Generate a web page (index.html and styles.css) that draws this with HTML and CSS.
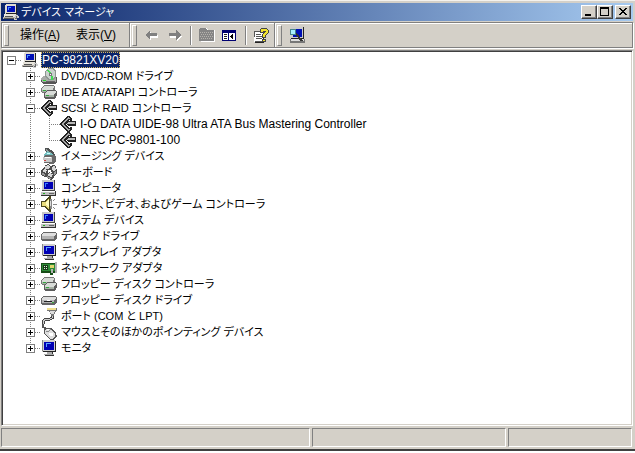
FILE: index.html
```html
<!DOCTYPE html>
<html lang="ja">
<head>
<meta charset="utf-8">
<title>デバイス マネージャ</title>
<link rel="stylesheet" href="styles.css">
</head>
<body>
<svg class="sprites" aria-hidden="true">
  <symbol id="pc" viewBox="0 0 16 16">
    <path d="M3 0h10v1h1v9H2V1h1z" fill="#dedbd3"/><path d="M13 1h1v9H3V9h10z" fill="#222"/>
    <path d="M4 2h8v6H4z" fill="#0010b8"/><path d="M5 3h3v1H6v2H5z" fill="#4890ff"/>
    <path d="M1 10h12v3H1z" fill="#e8e5dc"/><path d="M0 13h14v2H0z" fill="#b4b1aa"/><path d="M1 14h11v1H1zM13 10h1v3h-1zM2 12h8v1H2z" fill="#555"/>
    <path d="M12 11h3v1h1v2h-2v2h-3v-2h1z" fill="#ccc"/><path d="M13 12h1v3h-2v-1h1z" fill="#666"/>
  </symbol>
  <symbol id="computer" viewBox="0 0 16 16">
    <path d="M1 0h13v11H1z" fill="#444"/><path d="M1 0h12v10H1z" fill="#c8c8c8"/><path d="M3 2h9v7H3z" fill="#0000b4"/><path d="M4 3h3v1H5v3H4z" fill="#3880ff"/>
    <path d="M0 11h15v4H0z" fill="#c0c0c0"/><path d="M0 15h15v1H0zM14 11h1v5h-1z" fill="#333"/><path d="M0 11h14v1H0z" fill="#fff"/><path d="M2 13h2v1H2z" fill="#20b020"/><path d="M8 13h5v1H8z" fill="#666"/>
  </symbol>
  <symbol id="monitor" viewBox="0 0 16 16">
    <path d="M1 0h13v12H1z" fill="#d0d0d0"/><path d="M14 1h1v11H2v-1h12z" fill="#222"/><path d="M1 0h1v11H1z" fill="#888"/><path d="M3 2h10v8H3z" fill="#0000b4"/><path d="M5 3h5v1H6v3H5z" fill="#58a0ff"/>
    <path d="M6 12h5v2H6zM3 14h10v1H3z" fill="#aaa"/><path d="M4 15h9v1H4zM11 12h1v2h-1z" fill="#333"/>
  </symbol>
  <symbol id="disc" viewBox="0 0 16 16">
    <path d="M0 10l2-2h12l2 2v4l-2 2H2l-2-2z" fill="#555"/><path d="M0 10l2-2h12l1 2v4H1z" fill="#a9aca9"/>
    <path d="M5 2l3-2h4l3 3v6l-3 3H7L4 9V4z" fill="#8f9692"/><path d="M5 3l3-2h4l2 3v4l-3 3H8L5 8z" fill="#c9d2cd"/>
    <path d="M6 2h2l2 3-1 1zM10 7l2 1v4h-2z" fill="#42dd55"/><path d="M8 5h3v3H8z" fill="#777"/><path d="M9 6h1v1H9z" fill="#fff"/>
    <path d="M2 12h3v1H2z" fill="#25d52d"/><path d="M5 13h9v1H5z" fill="#666"/>
  </symbol>
  <symbol id="drives" viewBox="0 0 16 16">
    <path d="M0 4l3-3h9l2 2v3l-2 3H1L0 8z" fill="#777"/><path d="M1 4l2-2h9l1 1-1 3H1z" fill="#d7dbd7"/><path d="M1 6h10v2H1z" fill="#a5b0a5"/><path d="M2 6h3v1H2z" fill="#35a540"/>
    <path d="M3 10l3-4h8l2 2v3l-2 4H4l-1-1z" fill="#5c5c5c"/><path d="M4 10l2-3h8l1 1-2 3H4z" fill="#d7dbd7"/><path d="M4 11h9v2H4z" fill="#a5b0a5"/><path d="M5 11h3v1H5z" fill="#35a540"/>
  </symbol>
  <symbol id="scsi" viewBox="0 0 16 16">
    <path d="M7 0h2l3 3v2h-1L9 4 5 8l4 4 2-1h1v2l-3 3H7L0 9V7z" fill="#222"/>
    <path d="M8 1l2 2h-2L3 8l5 5h2l-2 2-7-7z" fill="#aaa"/>
    <path d="M8 5h7l1 1v3l-1 1H8L6 8V7z" fill="#222"/><path d="M8 6h7v2H7z" fill="#b8b8b8"/>
  </symbol>
  <symbol id="camera" viewBox="0 0 16 16">
    <path d="M4 0h3l6 4 1 3-2 1-8-5z" fill="#4f5252"/><path d="M5 1l7 5-1 1-6-4z" fill="#969c9c"/><path d="M3 6l3-3 6 3v3H4z" fill="#75bfc0"/><path d="M6 5h3v1H6z" fill="#c9ffff"/><path d="M2 9l2-2h9l2 2v5l-3 2-9-1z" fill="#696969"/><path d="M2 9h9v5H3z" fill="#c9c9c9"/><path d="M4 9h6v1H4z" fill="#fff"/><path d="M3 12h2v1H3z" fill="#c44"/>
  </symbol>
  <symbol id="keys" viewBox="0 0 16 16">
    <path d="M4 1l3-1 3 2v4H3zM0 6l3-2 4 2v5l-3 2-4-2zM9 5l2-4h3l2 5v4l-3 2zM5 11l3-3 5 2v4l-3 2-4-2z" fill="#4c4c4c"/>
    <path d="M4 2l3-1 2 2-1 2H4zM1 7l2-2 3 1-1 3-3-1zM11 4l1-2h2l1 4-3 1zM7 11l1-2 4 1-1 3-4-1z" fill="#d7d7d7"/><path d="M1 9l3 1v2l-3-1zM6 12l4 2v1l-4-1zM13 8l2-1v3l-2 1z" fill="#999"/>
  </symbol>
  <symbol id="speaker" viewBox="0 0 16 16">
    <path d="M0 5h3l5-5h2v16H8l-5-5H0z" fill="#4b481e"/><path d="M1 6h3l4-4v12L4 10H1z" fill="#e8dc79"/><path d="M5 6l3-3v9L5 9z" fill="#fffdc2"/><path d="M9 3h2v10H9z" fill="#888"/><path d="M9 5h1v5H9z" fill="#ddd"/><path d="M12 5l2-2M12 8h4M12 11l2 2" stroke="#888"/>
  </symbol>
  <symbol id="disk" viewBox="0 0 16 16">
    <path d="M0 6l2-2h12l2 1v5l-2 3H1l-1-1z" fill="#666"/><path d="M1 6l2-1h11l1 1-1 2H1z" fill="#dedede"/><path d="M1 8h12v3H1z" fill="#b4b4b4"/>
  </symbol>
  <symbol id="floppy" viewBox="0 0 16 16">
    <use href="#disk"/><path d="M3 9h8v1H3z" fill="#222"/><path d="M6 8h3v1H6z" fill="#fff"/><path d="M11 10h2v1h-2z" fill="#39a839"/>
  </symbol>
  <symbol id="network" viewBox="0 0 16 16">
    <path d="M0 3h15v10h-3v2H9v-2H0z" fill="#174d17"/><path d="M1 4h13v7H1z" fill="#2c8b36"/><path d="M2 5h5v5H2z" fill="#173717"/><path d="M3 6h1v1H3zM5 6h1v1H5zM3 8h1v1H3zM5 8h1v1H5z" fill="#d8f7d8"/><path d="M9 5h4v3H9z" fill="#ddd36b"/><path d="M10 9h2v4h-2zM14 2h2v11h-2z" fill="#b4b4b4"/>
  </symbol>
  <symbol id="port" viewBox="0 0 16 16">
    <path d="M6 0h10v3l-2 1-1 4h-3L9 4 6 3z" fill="#777"/><path d="M6 0h9v2H6z" fill="#f0df8d"/><path d="M9 3h5l-1 3h-3z" fill="#ddd"/><path d="M11 8v2l-2 1H5l-3 2v3" fill="none" stroke="#444" stroke-width="3"/><path d="M11 8v2l-2 1H5l-3 2v3" fill="none" stroke="#ccc"/>
  </symbol>
  <symbol id="mouse" viewBox="0 0 16 16">
    <path d="M2 0v3l5 3" fill="none" stroke="#555" stroke-width="2"/><path d="M4 4h6l5 5 1 3-4 4H9L3 10V6z" fill="#555"/><path d="M5 5h4l5 5v2l-2 3H9L4 9V6z" fill="#ddd"/><path d="M5 8l3-1 2-2" fill="none" stroke="#888"/><path d="M6 5h2v1H6zM8 9h4v3H9z" fill="#fff"/>
  </symbol>
</svg>

<main class="window">
  <header class="titlebar">
    <svg class="icon"><use href="#pc"/></svg>
    <h1 class="title">デバイス マネージャ</h1>
    <div class="captions">
      <button class="caption" aria-label="最小化"><svg class="glyph" viewBox="0 0 12 10"><path d="M2 7h6v2H2z"/></svg></button>
      <button class="caption" aria-label="最大化"><svg class="glyph" viewBox="0 0 12 10"><path fill-rule="evenodd" d="M1 0h9v9H1zM2 2v6h7V2z"/></svg></button>
      <button class="caption close" aria-label="閉じる"><svg class="glyph" viewBox="0 0 12 10"><path d="M2 1h2v1h1v1h2V2h1V1h2v1H9v1H8v1H7v1h1v1h1v1h1v1H8V7H7V6H5v1H4v1H2V7h1V6h1V5h1V4H4V3H3V2H2z"/></svg></button>
    </div>
  </header>

  <div class="toolbar">
    <nav class="band menus">
      <button class="menu">操作(<u>A</u>)</button>
      <button class="menu">表示(<u>V</u>)</button>
    </nav>
    <div class="band tools">
      <button class="tool" aria-label="戻る"><svg class="icon" viewBox="0 0 16 16"><path d="M2 9l5-4v3h7v3H7v3z" fill="#fff"/><path d="M1 8l5-5v3h7v3H6v4z" fill="#808080"/></svg></button>
      <button class="tool" aria-label="進む"><svg class="icon" viewBox="0 0 16 16"><path d="M15 9l-5-4v3H3v3h7v3z" fill="#fff"/><path d="M14 8L9 3v3H2v3h7v4z" fill="#808080"/></svg></button>
      <span class="divider"></span>
      <button class="tool" aria-label="上へ"><svg class="icon" viewBox="0 0 16 16"><path d="M1 3l1-2h5l2 2h7v12H2z" fill="#fff"/><path d="M0 2l1-1h5l2 2h7v11H0z" fill="#858585"/><path d="M1 5h13M2 7h12M1 9h13M2 11h12" stroke="#b5b2ad" stroke-dasharray="1 1"/></svg></button>
      <button class="tool" aria-label="ツリーの表示"><svg class="icon" viewBox="0 0 16 16"><path d="M0 3h14v11H0z" fill="#000070"/><path d="M1 6h5v7H1zM7 6h6v7H7z" fill="#fff"/><path d="M2 7h3v1H2zM2 9h3v1H2zM2 11h3v1H2z" fill="#222"/><path d="M8 9l3-3v7z" fill="#000"/></svg></button>
      <span class="divider"></span>
      <button class="tool" aria-label="ヘルプ"><svg class="icon" viewBox="0 0 16 16"><path d="M1 4h9v12H1z" fill="#222"/><path d="M0 4h9v11H0z" fill="#fff"/><path d="M0 4h9v1H0zM0 5h1v10h9v-1H1zM2 7h5v1H2zM2 9h6v1H2zM2 11h6v1H2z" fill="#555"/><path d="M6 5V3l2-2h4l2 2v3l-3 3v1H8V8l3-3V4H9v1zM8 12h3v2H8z" fill="#f1e22d" stroke="#444"/></svg></button>
    </div>
    <div class="band scan">
      <button class="tool" aria-label="ハードウェア変更のスキャン"><svg class="icon" viewBox="0 0 16 16"><path d="M2 0h13v12H2z" fill="#222"/><path d="M2 0h12v11H2z" fill="#ccc"/><path d="M4 2h9v8H4z" fill="#0010b4"/><path d="M1 12h15v4H1z" fill="#777"/><path d="M2 12h13v2H2z" fill="#ddd"/><path d="M6 6l7 8" stroke="#333" stroke-width="2"/><circle cx="4" cy="5" r="3" fill="#a8f0ff" stroke="#47868b"/></svg></button>
    </div>
  </div>

  <section class="pane">
    <ul class="tree">
      <li>
        <div class="row"><button class="expander open" aria-label="折りたたむ"></button><svg class="icon"><use href="#pc"/></svg><span class="label selected">PC-9821XV20</span></div>
        <ul class="branch">
          <li><div class="row"><button class="expander" aria-label="展開"></button><svg class="icon"><use href="#disc"/></svg><span class="label kana">DVD/CD-ROM ドライブ</span></div></li>
          <li><div class="row"><button class="expander" aria-label="展開"></button><svg class="icon"><use href="#drives"/></svg><span class="label kana">IDE ATA/ATAPI コントローラ</span></div></li>
          <li>
            <div class="row"><button class="expander open" aria-label="折りたたむ"></button><svg class="icon"><use href="#scsi"/></svg><span class="label kana">SCSI と RAID コントローラ</span></div>
            <ul class="branch">
              <li><div class="row leaf"><svg class="icon"><use href="#scsi"/></svg><span class="label">I-O DATA UIDE-98 Ultra ATA Bus Mastering Controller</span></div></li>
              <li><div class="row leaf"><svg class="icon"><use href="#scsi"/></svg><span class="label">NEC PC-9801-100</span></div></li>
            </ul>
          </li>
          <li><div class="row"><button class="expander" aria-label="展開"></button><svg class="icon"><use href="#camera"/></svg><span class="label kana">イメージング デバイス</span></div></li>
          <li><div class="row"><button class="expander" aria-label="展開"></button><svg class="icon"><use href="#keys"/></svg><span class="label kana">キーボード</span></div></li>
          <li><div class="row"><button class="expander" aria-label="展開"></button><svg class="icon"><use href="#computer"/></svg><span class="label kana">コンピュータ</span></div></li>
          <li><div class="row"><button class="expander" aria-label="展開"></button><svg class="icon"><use href="#speaker"/></svg><span class="label kana">サウンド、ビデオ、およびゲーム コントローラ</span></div></li>
          <li><div class="row"><button class="expander" aria-label="展開"></button><svg class="icon"><use href="#computer"/></svg><span class="label kana">システム デバイス</span></div></li>
          <li><div class="row"><button class="expander" aria-label="展開"></button><svg class="icon"><use href="#disk"/></svg><span class="label kana">ディスク ドライブ</span></div></li>
          <li><div class="row"><button class="expander" aria-label="展開"></button><svg class="icon"><use href="#monitor"/></svg><span class="label kana">ディスプレイ アダプタ</span></div></li>
          <li><div class="row"><button class="expander" aria-label="展開"></button><svg class="icon"><use href="#network"/></svg><span class="label kana">ネットワーク アダプタ</span></div></li>
          <li><div class="row"><button class="expander" aria-label="展開"></button><svg class="icon"><use href="#drives"/></svg><span class="label kana">フロッピー ディスク コントローラ</span></div></li>
          <li><div class="row"><button class="expander" aria-label="展開"></button><svg class="icon"><use href="#floppy"/></svg><span class="label kana">フロッピー ディスク ドライブ</span></div></li>
          <li><div class="row"><button class="expander" aria-label="展開"></button><svg class="icon"><use href="#port"/></svg><span class="label kana">ポート (COM と LPT)</span></div></li>
          <li><div class="row"><button class="expander" aria-label="展開"></button><svg class="icon"><use href="#mouse"/></svg><span class="label kana">マウスとそのほかのポインティング デバイス</span></div></li>
          <li><div class="row"><button class="expander" aria-label="展開"></button><svg class="icon"><use href="#monitor"/></svg><span class="label kana">モニタ</span></div></li>
        </ul>
      </li>
    </ul>
  </section>

  <footer class="status"><span></span><span></span><span></span></footer>
</main>
</body>
</html>
```
FILE: styles.css
```css
* { box-sizing: border-box; }

body {
  margin: 0;
  min-height: 100vh;
  display: flex;
  flex-direction: column;
  padding-bottom: 2px;
  background: #fff;
  color: #000;
  font: 12px/16px "Liberation Sans", "Noto Sans CJK JP", sans-serif;
  font-feature-settings: "palt";
}

button { font: inherit; color: inherit; padding: 0; border: 0; background: none; }
ul { list-style: none; margin: 0; padding: 0; }
svg { shape-rendering: crispEdges; display: block; }
.sprites { position: absolute; width: 0; height: 0; }
.icon { width: 16px; height: 16px; flex: none; }

.window {
  flex: 1;
  display: flex;
  flex-direction: column;
  padding: 2px 2px 1px 1px;
  background: #d4d0c8;
  border-top: 1px solid #f4f2ee;
  border-bottom: 2px solid #404040;
}

.titlebar {
  display: flex;
  align-items: center;
  height: 18px;
  padding: 0 2px;
  background: linear-gradient(to right, #0a246a, #a6caf0);
  color: #fff;
}
.title { flex: 1; margin: 0 0 0 2px; font-size: 11px; font-weight: 400; }
.captions { display: flex; }
.caption {
  width: 16px;
  height: 14px;
  padding: 1px;
  background: #d4d0c8;
  border: 1px solid;
  border-color: #fff #404040 #404040 #fff;
  box-shadow: inset -1px -1px #808080;
}
.close { margin-left: 2px; }
.glyph { width: 12px; height: 10px; }

.toolbar {
  display: flex;
  height: 26px;
  margin-top: 1px;
  border: 1px solid #808080;
  box-shadow: inset 1px 1px #fff, 1px 1px #fff;
}
.band { display: flex; align-items: center; padding-left: 2px; border-right: 1px solid #808080; box-shadow: 1px 0 #fff; }
.band::before { content: ""; width: 3px; height: 19px; border: 1px solid; border-color: #fff #808080 #808080 #fff; }
.menus { width: 128px; gap: 16px; }
.menus::before { margin-right: -5px; }
.tools { width: 145px; gap: 7px; }
.scan { flex: 1; gap: 7px; border: 0; box-shadow: none; }
.divider { width: 2px; height: 19px; border-left: 1px solid #808080; border-right: 1px solid #fff; }

.pane {
  flex: 1;
  margin: 2px 0 0;
  padding: 0 4px;
  background: #fff;
  border: 1px solid;
  border-color: #808080 #fff #fff #808080;
  box-shadow: inset 1px 1px #404040, inset -1px -1px #d4d0c8;
}
.row { display: flex; align-items: center; height: 16px; padding-left: 1px; }
.expander {
  position: relative;
  flex: none;
  width: 9px;
  height: 9px;
  margin-right: 6px;
  border: 1px solid #808080;
  background:
    linear-gradient(#000, #000) center / 5px 1px no-repeat,
    linear-gradient(#000, #000) center / 1px 5px no-repeat,
    #fff;
}
.expander.open { background: linear-gradient(#000, #000) center / 5px 1px no-repeat, #fff; }
.expander::after {
  content: "";
  position: absolute;
  left: 8px;
  top: 3px;
  width: 6px;
  height: 1px;
  background: repeating-linear-gradient(to right, #808080 0 1px, transparent 1px 2px);
}
.tree { padding-top: 1px; }
.branch { margin-left: 19px; }
.branch > li {
  background: repeating-linear-gradient(#808080 0 1px, transparent 1px 2px) 5px 0 / 1px 100% no-repeat;
}
.branch > li:last-child { background-size: 1px 8px; }
.leaf::before {
  content: "";
  width: 11px;
  height: 1px;
  margin-left: 4px;
  background: repeating-linear-gradient(to right, #808080 0 1px, transparent 1px 2px);
}
.label { margin-left: 3px; padding: 0 1px; white-space: nowrap; }
.kana { font-size: 11px; }
.selected { background: #0a246a; color: #fff; outline: 1px dotted #d8b860; outline-offset: -1px; }

.status { display: grid; grid-template-columns: 309fr 195fr 124fr; gap: 2px; margin: 2px 1px 1px 0; }
.status span { height: 19px; border: 1px solid; border-color: #808080 #fff #fff #808080; }
```
